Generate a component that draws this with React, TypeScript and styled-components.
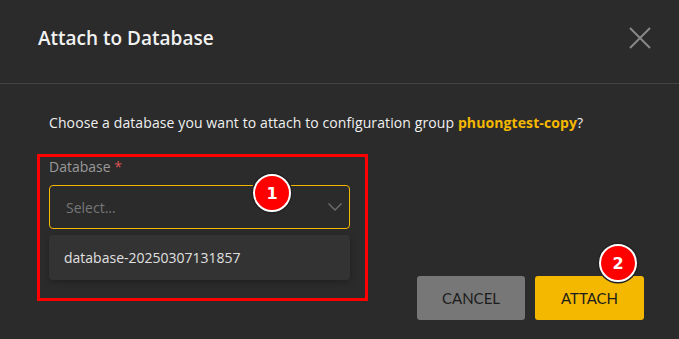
import { FC, ReactNode } from "react";
import styled, { createGlobalStyle } from "styled-components";

const GlobalStyle = createGlobalStyle`
  html, body {
    margin: 0;
    padding: 0;
    background: #2b2b2b;
  }
  body {
    font-family: "Open Sans", "Noto Sans", sans-serif;
    color: #e6e6e6;
  }
`;

const Marker: FC<{ n: number; top: number; left: number }> = ({ n, top, left }) => (
  <Badge style={{ top, left }}>{n}</Badge>
);

const Chevron = () => (
  <svg width="16" height="10" viewBox="0 0 16 10" fill="none">
    <path d="M1.5 1.5 L8 8 L14.5 1.5" stroke="#6e6e6e" strokeWidth="1.4" />
  </svg>
);

const CloseIcon = () => (
  <svg width="22" height="22" viewBox="0 0 22 22" fill="none">
    <path d="M1 1 L21 21 M21 1 L1 21" stroke="#888" strokeWidth="2" />
  </svg>
);

const Annotated: FC<{ children: ReactNode }> = ({ children }) => <FieldBox>{children}</FieldBox>;

export default function App() {
  return (
    <Dialog>
      <GlobalStyle />
      <Header>
        <Title>Attach to Database</Title>
        <CloseButton aria-label="close">
          <CloseIcon />
        </CloseButton>
      </Header>
      <Body>
        <Description>
          Choose a database you want to attach to configuration group <Highlight>phuongtest-copy</Highlight>?
        </Description>
        <Row>
          <Annotated>
            <Label>
              Database <Required>*</Required>
            </Label>
            <SelectBox>
              <Placeholder>Select...</Placeholder>
              <Chevron />
              <Marker n={1} top={-12} left={203} />
            </SelectBox>
            <Menu>
              <Option>database-20250307131857</Option>
            </Menu>
          </Annotated>
          <Actions>
            <ActionButton $variant="cancel">CANCEL</ActionButton>
            <ActionButton $variant="primary">
              ATTACH
              <Marker n={2} top={-32} left={64} />
            </ActionButton>
          </Actions>
        </Row>
      </Body>
    </Dialog>
  );
}

const Dialog = styled.div`
  width: 679px;
  height: 339px;
  background: #2b2b2b;
  overflow: hidden;
`;

const Header = styled.div`
  height: 84px;
  box-sizing: border-box;
  display: flex;
  align-items: center;
  justify-content: space-between;
  padding: 0 28px 8px 38px;
  border-bottom: 1px solid #444;
`;

const Title = styled.h2`
  margin: 0;
  font-size: 19px;
  font-weight: 600;
  color: #f2f2f2;
`;

const CloseButton = styled.button`
  background: none;
  border: none;
  padding: 0;
  display: flex;
  cursor: pointer;
`;

const Body = styled.div`
  padding: 29px 35px 0 37px;
`;

const Description = styled.p`
  margin: 0 0 22px 12px;
  font-size: 14px;
  letter-spacing: 0.1px;
  color: #f0f0f0;
`;

const Highlight = styled.span`
  color: #f5b800;
  font-weight: 700;
`;

const Row = styled.div`
  display: flex;
  align-items: flex-start;
  justify-content: space-between;
`;

const FieldBox = styled.div`
  width: 331px;
  box-sizing: border-box;
  border: 3px solid #ff0000;
  padding: 0 15px 18px 9px;
`;

const Label = styled.div`
  font-size: 14px;
  color: #9a9a9a;
  margin-bottom: 9px;
`;

const Required = styled.span`
  color: #d9534f;
`;

const SelectBox = styled.div`
  position: relative;
  height: 44px;
  box-sizing: border-box;
  border: 1px solid #f5b800;
  border-radius: 4px;
  display: flex;
  align-items: center;
  justify-content: space-between;
  padding: 0 6px 0 16px;
`;

const Placeholder = styled.span`
  font-size: 14px;
  color: #777;
`;

const Menu = styled.div`
  margin-top: 6px;
  background: #333;
  border-radius: 4px;
  box-shadow: 0 2px 6px rgba(0, 0, 0, 0.25);
`;

const Option = styled.div`
  height: 45px;
  display: flex;
  align-items: center;
  padding-left: 15px;
  font-size: 14px;
  color: #e0e0e0;
`;

const Actions = styled.div`
  display: flex;
  gap: 10px;
  margin-top: 122px;
`;

const ActionButton = styled.button<{ $variant: "cancel" | "primary" }>`
  position: relative;
  width: ${(p) => (p.$variant === "cancel" ? 108 : 109)}px;
  height: 44px;
  border: none;
  border-radius: 3px;
  font-family: Lato, sans-serif;
  font-size: 15px;
  color: #1c1c1c;
  background: ${(p) => (p.$variant === "cancel" ? "#777" : "#f5b800")};
  cursor: pointer;
`;

const Badge = styled.span`
  position: absolute;
  width: 34px;
  height: 34px;
  border-radius: 50%;
  background: #ff0000;
  border: 2px solid #fff;
  box-shadow: 0 0 0 1.5px #222;
  display: flex;
  align-items: center;
  justify-content: center;
  font-family: "DejaVu Sans", sans-serif;
  font-weight: 700;
  font-size: 16px;
  color: #fff;
`;
